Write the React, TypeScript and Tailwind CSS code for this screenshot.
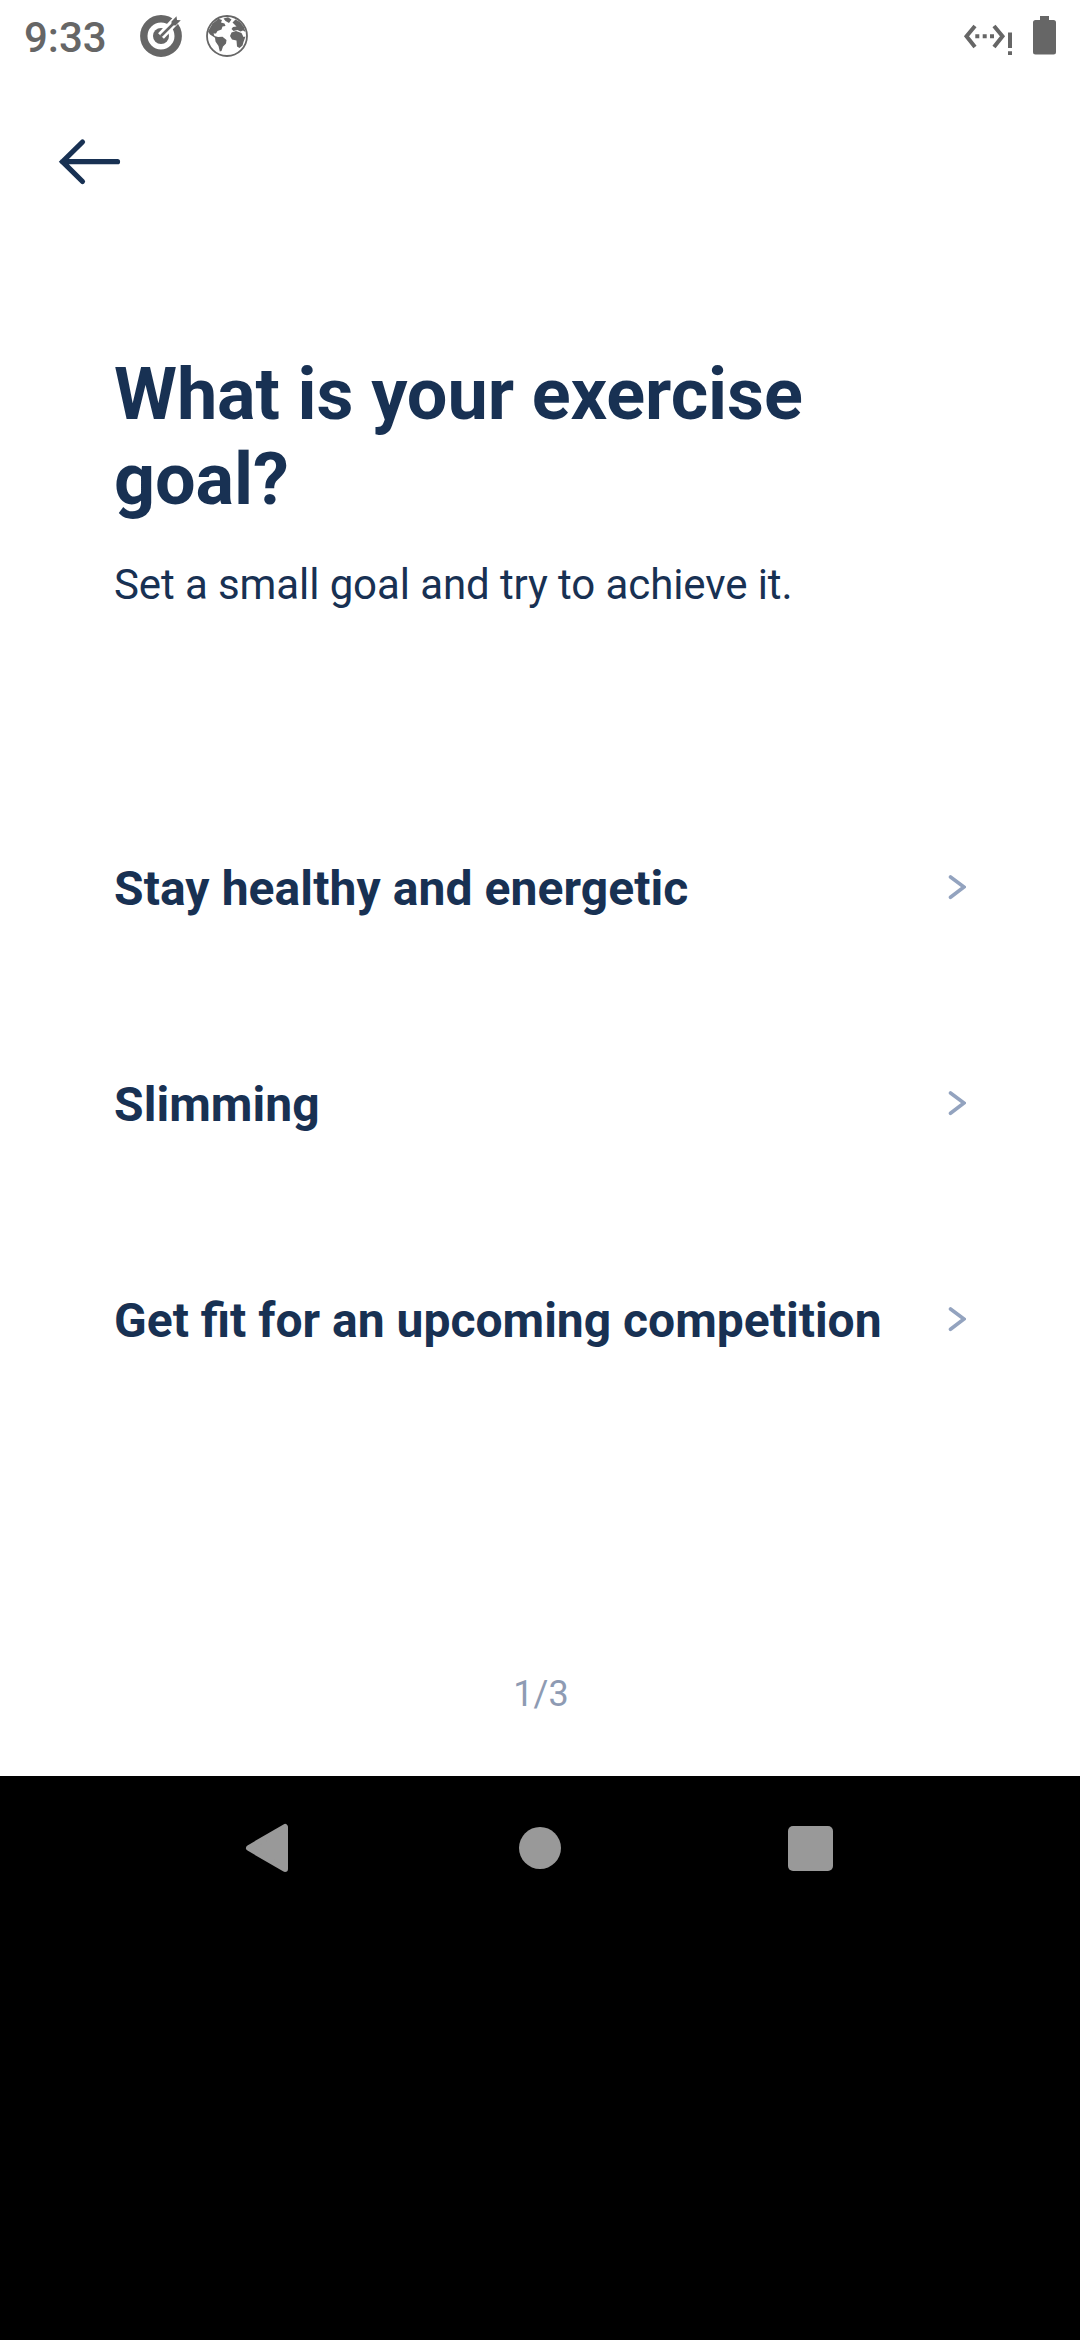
function StatusBar() {
  return (
    <header className="flex h-[72px] items-center pr-6 pl-6 text-[#666666]">
      <span className="pt-[3px] text-[42px] leading-[69px] font-medium">9:33</span>
      <svg className="ml-8 size-[44px]" viewBox="0 0 44 44" fill="none">
        <circle cx="22" cy="22" r="17.2" stroke="currentColor" strokeWidth="7.4" />
        <circle cx="22" cy="22" r="8" fill="currentColor" />
        <path d="M22 22 40 3" stroke="#ffffff" strokeWidth="8" />
        <path d="M22.5 21.5 35 9" stroke="currentColor" strokeWidth="2.6" strokeLinecap="round" />
        <path d="M32.500 7.500 37.500 2.200 38 6l3.800.3-5.300 5.200-4-.5Z" fill="currentColor" />
      </svg>
      <svg className="ml-[22px] size-[44px]" viewBox="0 0 44 44" fill="none">
        <circle cx="22" cy="22" r="20" stroke="currentColor" strokeWidth="1.8" />
        <path
          fill="currentColor"
          d="M3 17.500 7.500 9.500 13.500 4.800 17 6 16 8.500 19.500 9.500 20.500 12 17.500 12.500 16.500 15.500 12.500 17 11 19.500 8.500 19.500 9.500 22 13 23 17.500 22.800 21.500 26 21 29.500 18 32.500 16.500 37 14.800 37.500 13.500 32 10.500 27.500 10 23.800 5 20.500ZM18.500 4.500 23 3.200 26.500 5.500 24 9 20.500 7ZM27.500 8.500 30.500 5.500 35 8 39 13 40.500 18 38 16.500 35.500 17.500 32.500 16 28.500 17 26.500 15 28 13 31.500 12.500ZM26.500 18.500 31 17 36.500 19 38.500 23 40.500 22.500 38.500 28 37.500 31.500 34.500 34 32 32.500 31.500 26.500 27 25.500 25 22Z"
        />
      </svg>
      <div className="ml-auto flex items-center">
        <svg className="h-[44px] w-[52px]" viewBox="0 0 52 44" fill="none">
          <path d="M15 12 6.500 22.300 15 33M34 12l8.500 10.300L34 33" stroke="currentColor" strokeWidth="4" />
          <path
            fill="currentColor"
            d="M15.300 20.300h4v4h-4ZM22.700 20.300h4v4h-4ZM30 20.300h4v4h-4ZM48 18.500h4V34h-4ZM48 37.300h4V41h-4Z"
          />
        </svg>
        <svg className="ml-[20px] h-[44px] w-[24px]" viewBox="0 0 24 44">
          <path
            fill="currentColor"
            d="M3.500 6H8V2h9v4h4.500q2.500 0 2.500 2.500v29.500q0 2.500-2.500 2.500h-18q-2.500 0-2.500-2.500V8.500Q1 6 3.500 6Z"
          />
        </svg>
      </div>
    </header>
  );
}

const goals = [
  { label: "Stay healthy and energetic", tracking: "tracking-[0.08px]" },
  { label: "Slimming", tracking: "tracking-[0.08px]" },
  { label: "Get fit for an upcoming competition", tracking: "tracking-normal" },
];

export default function App() {
  return (
    <div className="flex h-[2340px] w-[1080px] flex-col bg-black font-['Roboto',sans-serif]">
      <div className="flex h-[1776px] flex-col bg-white text-[#183153]">
        <StatusBar />
        <nav className="flex h-[180px] items-center pl-[54px]">
          <button aria-label="Back">
            <svg className="size-[72px]" viewBox="0 0 72 72" fill="none">
              <path
                d="M8.500 35.700h55M28.500 16 8.500 35.700l20 19.800"
                stroke="currentColor"
                strokeWidth="5.200"
                strokeLinecap="round"
              />
            </svg>
          </button>
        </nav>
        <main className="flex flex-1 flex-col px-[114px] pt-[100px]">
          <h1 className="text-[72px] leading-[85px] font-bold tracking-[-0.1px]">
            What is your exercise goal?
          </h1>
          <p className="mt-[38px] text-[42px] leading-[50px] tracking-[-0.1px]">
            Set a small goal and try to achieve it.
          </p>
          <ul className="mt-[169px]">
            {goals.map(({ label, tracking }) => (
              <li key={label} className="flex h-[216px] items-center justify-between">
                <span className={`pt-1 text-[48px] leading-[56px] font-bold ${tracking}`}>{label}</span>
                <svg className="h-[26px] w-[20px]" viewBox="0 0 20 26" fill="none">
                  <path d="M4.500 3 18 13 4.500 23.300" stroke="#93a3bf" strokeWidth="3.600" strokeLinecap="round" />
                </svg>
              </li>
            ))}
          </ul>
          <p className="mt-auto mb-[61px] pl-[2px] text-center text-[36px] leading-[42px] text-[#8e9bb3]">1/3</p>
        </main>
      </div>
      <footer className="grid h-[144px] grid-cols-3 items-center px-[135px] text-[#999999]">
        <svg className="mr-[6px] h-[50px] w-[44px] justify-self-center" viewBox="0 0 44 50">
          <path
            d="M4 25 40 4v42Z"
            fill="currentColor"
            stroke="currentColor"
            strokeWidth="6"
            strokeLinejoin="round"
          />
        </svg>
        <span className="size-[42px] justify-self-center rounded-full bg-current" />
        <span className="size-[45px] justify-self-center rounded-[5px] bg-current" />
      </footer>
    </div>
  );
}
